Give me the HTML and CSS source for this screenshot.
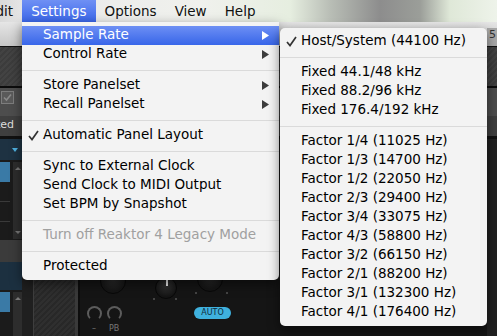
FILE: index.html
```html
<!DOCTYPE html>
<html>
  <head>
    <meta charset="UTF-8">
    <title>Settings menu</title>
    <link rel="stylesheet" href="styles.css">
  </head>
  <body>
    <div class="screen">
      <div class="menubar">
        <span class="mb-item mb-edit">Edit</span>
        <span class="mb-item on">Settings</span>
        <span class="mb-item">Options</span>
        <span class="mb-item">View</span>
        <span class="mb-item">Help</span>
      </div>

      <div class="app">
        <div class="toolbar"><span class="num">5</span></div>
        <div class="band"></div>
        <div class="row-check">
          <span class="checkbox">
            <svg width="11" height="11" viewBox="0 0 11 11"><path d="M2 5.5 L4.5 8 L9 2.5" fill="none" stroke="#8a8a8a" stroke-width="1.6"/></svg>
          </span>
        </div>
        <div class="row-lock"><span>Locked</span></div>

        <div class="workspace">
          <div class="side">
            <div class="side-head"><span class="drop"></span></div>
            <div class="side-list">
              <div class="rows">
                <div class="sel"></div>
                <div class="line"></div>
                <div class="line"></div>
              </div>
              <div class="scroll"><span class="up"></span><span class="down"></span></div>
            </div>
            <div class="side-grey"></div>
            <div class="side-blue"></div>
            <div class="side-list short">
              <div class="rows">
                <div class="sel"></div>
              </div>
              <div class="scroll"><span class="up"></span></div>
            </div>
          </div>

          <div class="main">
            <div class="main-fill"></div>
            <div class="panel">
              <div class="gap"></div>
              <div class="strip"></div>
              <div class="divider"></div>
              <div class="controls">
                <span class="knob big k1"></span>
                <span class="ring r1"></span>
                <span class="ring r2"></span>
                <span class="lbl l1">–</span>
                <span class="lbl l2">PB</span>
                <span class="knob k2"><i></i></span>
                <span class="dot d1"></span>
                <span class="dot d2"></span>
                <span class="knob big k3"></span>
                <span class="dot d3"></span>
                <span class="dot d4"></span>
                <span class="auto">AUTO</span>
              </div>
            </div>
          </div>

          <div class="edge"></div>
        </div>
      </div>

      <div class="menu main-menu">
        <div class="item hl">Sample Rate
          <svg class="arrow" width="7" height="9" viewBox="0 0 7 9"><polygon points="0,0 7,4.5 0,9" fill="#fff"/></svg>
        </div>
        <div class="item">Control Rate
          <svg class="arrow" width="7" height="9" viewBox="0 0 7 9"><polygon points="0,0 7,4.5 0,9" fill="#3c3c3c"/></svg>
        </div>
        <div class="sep"></div>
        <div class="item">Store Panelset
          <svg class="arrow" width="7" height="9" viewBox="0 0 7 9"><polygon points="0,0 7,4.5 0,9" fill="#3c3c3c"/></svg>
        </div>
        <div class="item">Recall Panelset
          <svg class="arrow" width="7" height="9" viewBox="0 0 7 9"><polygon points="0,0 7,4.5 0,9" fill="#3c3c3c"/></svg>
        </div>
        <div class="sep"></div>
        <div class="item">
          <svg class="tick" width="11" height="11" viewBox="0 0 11 11"><path d="M1 6 L4 9.5 L10 1" fill="none" stroke="#333" stroke-width="1.7"/></svg>
          Automatic Panel Layout
        </div>
        <div class="sep"></div>
        <div class="item">Sync to External Clock</div>
        <div class="item">Send Clock to MIDI Output</div>
        <div class="item">Set BPM by Snapshot</div>
        <div class="sep"></div>
        <div class="item off">Turn off Reaktor 4 Legacy Mode</div>
        <div class="sep"></div>
        <div class="item">Protected</div>
      </div>

      <div class="menu sub-menu">
        <div class="item">
          <svg class="tick" width="11" height="11" viewBox="0 0 11 11"><path d="M1 6 L4 9.5 L10 1" fill="none" stroke="#333" stroke-width="1.7"/></svg>
          Host/System (44100 Hz)
        </div>
        <div class="sep"></div>
        <div class="item">Fixed 44.1/48 kHz</div>
        <div class="item">Fixed 88.2/96 kHz</div>
        <div class="item">Fixed 176.4/192 kHz</div>
        <div class="sep"></div>
        <div class="item">Factor 1/4 (11025 Hz)</div>
        <div class="item">Factor 1/3 (14700 Hz)</div>
        <div class="item">Factor 1/2 (22050 Hz)</div>
        <div class="item">Factor 2/3 (29400 Hz)</div>
        <div class="item">Factor 3/4 (33075 Hz)</div>
        <div class="item">Factor 4/3 (58800 Hz)</div>
        <div class="item">Factor 3/2 (66150 Hz)</div>
        <div class="item">Factor 2/1 (88200 Hz)</div>
        <div class="item">Factor 3/1 (132300 Hz)</div>
        <div class="item">Factor 4/1 (176400 Hz)</div>
      </div>
    </div>
  </body>
</html>
```

FILE: styles.css
```css
* {
  margin: 0;
  padding: 0;
  box-sizing: border-box;
}

body {
  background: #1a1a1a;
  font-family: "DejaVu Sans", "Liberation Sans", sans-serif;
}

.screen {
  position: relative;
  width: 497px;
  height: 336px;
  overflow: hidden;
}

/* menu bar */

.menubar {
  height: 22px;
  display: flex;
  font-size: 13.5px;
  line-height: 22px;
  color: #111;
  white-space: nowrap;
  background: linear-gradient(90deg, #d9d9d9 0, #e9e9e9 30px, #f0f1ed 200px, #e6eee0 290px, #b9beb6 330px, #8d8d8d 380px, #9b9e99 420px, #dfe8d8 450px, #eef3ea 497px);
}

.mb-item {
  flex: none;
  padding: 0 9px;
}

.mb-edit {
  margin-left: -22px;
}

.mb-item.on {
  color: #fff;
  background: linear-gradient(#6f90f4, #3b67ea);
}

/* app behind the menus */

.app {
  height: 314px;
  display: flex;
  flex-direction: column;
}

.toolbar {
  height: 25px;
  display: flex;
  justify-content: flex-end;
  align-items: flex-end;
  background: linear-gradient(#e6e6e6, #c6c6c6);
  border-bottom: 1px solid #111;
}

.toolbar .num {
  width: 10px;
  height: 18px;
  padding-left: 2px;
  font-size: 11px;
  line-height: 14px;
  color: #333;
  background: #a9a9a9;
}

.band {
  height: 41px;
  background: repeating-linear-gradient(135deg, #434343 0 2px, #3c3c3c 2px 4px);
  border-bottom: 2px solid #0c0c0c;
}

.row-check {
  height: 28px;
  background: #4d4d4d;
  padding: 3px 0 0 1px;
}

.checkbox {
  display: block;
  width: 13px;
  height: 13px;
  border: 1px solid #7d7d7d;
  background: #5a5a5a;
}

.checkbox svg {
  display: block;
}

.row-lock {
  height: 23px;
  background: #3f3f3f;
  border-bottom: 3px solid #111;
}

.row-lock span {
  display: flex;
  justify-content: flex-end;
  width: 14px;
  font-size: 11px;
  line-height: 18px;
  color: #ddd;
  white-space: nowrap;
}

.workspace {
  flex: 1;
  display: flex;
}

.side {
  width: 22px;
  display: flex;
  flex-direction: column;
  background: #1b1b1b;
}

.side-head {
  height: 21px;
  background: #1e3242;
  padding: 9px 0 0 12px;
}

.drop {
  display: block;
  width: 0;
  height: 0;
  border-left: 3px solid transparent;
  border-right: 3px solid transparent;
  border-top: 4px solid #4fb1e0;
}

.side-list {
  height: 79px;
  display: flex;
  gap: 3px;
  padding-top: 2px;
}

.side-list.short {
  flex: 1;
}

.rows {
  width: 10px;
  display: flex;
  flex-direction: column;
  gap: 19px;
}

.sel {
  height: 20px;
  background: #3a7aa6;
}

.line {
  height: 1px;
  background: #3a3a3a;
}

.scroll {
  width: 9px;
  display: flex;
  flex-direction: column;
  justify-content: space-between;
  align-items: center;
  padding: 5px 0;
  background: #2d2d2d;
}

.up,
.down {
  width: 0;
  height: 0;
  border-left: 3px solid transparent;
  border-right: 3px solid transparent;
}

.up {
  border-bottom: 3px solid #777;
}

.down {
  border-top: 3px solid #777;
}

.side-grey {
  height: 22px;
  background: #3b3b3b;
  margin-top: 1px;
}

.side-blue {
  height: 28px;
  background: #1c3040;
}

.main {
  flex: 1;
  display: flex;
  flex-direction: column;
}

.main-fill {
  flex: 1;
  background: #1c1c1c;
}

.panel {
  height: 56px;
  display: flex;
}

.gap {
  width: 11px;
  background: #1f1f1f;
}

.strip {
  width: 42px;
  background: repeating-linear-gradient(135deg, #2f2f2f 0 2px, #282828 2px 4px);
  border-left: 1px solid #3e3e3e;
}

.divider {
  width: 5px;
  background: #3a3a3a;
  border-right: 2px solid #0d0d0d;
}

/* knobs sit on the panel like a free canvas */
.controls {
  position: relative;
  flex: 1;
  background: #151515;
}

.knob {
  position: absolute;
  border-radius: 50%;
  background: radial-gradient(circle at 50% 35%, #333, #151515 70%);
  border: 1px solid #080808;
}

.knob.big {
  width: 26px;
  height: 26px;
}

.k1 {
  left: 20px;
  top: -12px;
}

.k3 {
  left: 117px;
  top: -14px;
  width: 30px;
  height: 30px;
}

.k2 {
  left: 75px;
  top: -3px;
  width: 22px;
  height: 22px;
}

.k2 i {
  position: absolute;
  left: 10px;
  top: 2px;
  width: 2px;
  height: 6px;
  background: #eee;
}

.ring {
  position: absolute;
  top: 26px;
  width: 15px;
  height: 15px;
  border-radius: 50%;
  border: 2px solid #5c5c5c;
  border-bottom-color: transparent;
}

.r1 {
  left: 7px;
}

.r2 {
  left: 27px;
}

.lbl {
  position: absolute;
  top: 44px;
  font-size: 8px;
  color: #777;
}

.l1 {
  left: 12px;
}

.l2 {
  left: 29px;
}

.dot {
  position: absolute;
  width: 2px;
  height: 2px;
  background: #444;
}

.d1 {
  left: 73px;
  top: 18px;
}

.d2 {
  left: 95px;
  top: 18px;
}

.d3 {
  left: 115px;
  top: 12px;
}

.d4 {
  left: 146px;
  top: 12px;
}

.auto {
  position: absolute;
  left: 114px;
  top: 27px;
  width: 37px;
  height: 12px;
  border-radius: 6px;
  background: #3fb1de;
  color: #0f2b3b;
  font-size: 8px;
  line-height: 12px;
  text-align: center;
}

.edge {
  width: 10px;
  background: #202020;
}

/* pull-down menus */

.menu {
  position: absolute;
  padding: 4px 0;
  background: #f3f3f3;
  font-size: 13.5px;
  box-shadow: 0 4px 12px rgba(0, 0, 0, .5);
}

.main-menu {
  left: 22px;
  top: 22px;
  width: 257px;
  border-radius: 0 0 5px 5px;
}

.sub-menu {
  left: 280px;
  top: 28px;
  width: 207px;
  border-radius: 5px;
}

.item {
  position: relative;
  height: 19px;
  line-height: 16px;
  padding-left: 21px;
  color: #000;
  white-space: nowrap;
}

.item.hl {
  color: #fff;
  background: linear-gradient(#6d8ff4, #3866e9);
}

.item.off {
  color: #a0a0a0;
}

.arrow {
  position: absolute;
  right: 10px;
  top: 5px;
}

.tick {
  position: absolute;
  left: 6px;
  top: 4px;
}

.sep {
  height: 1px;
  margin: 6px 0 5px;
  background: #dadada;
}
```
